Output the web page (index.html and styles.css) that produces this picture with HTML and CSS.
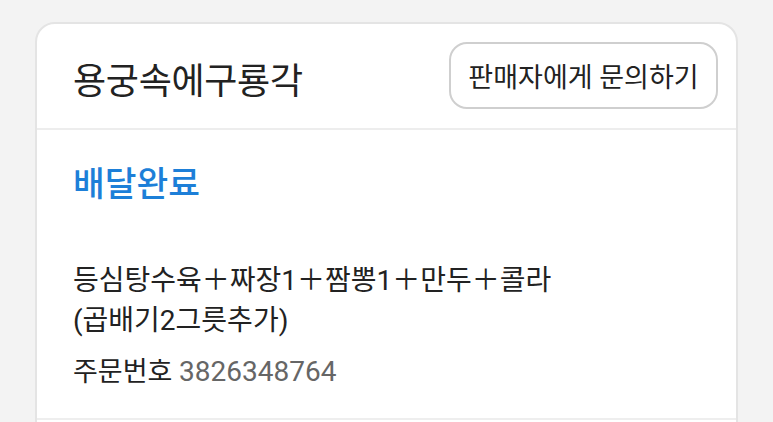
FILE: index.html
```html
<!DOCTYPE html>
<html lang="ko">
<head>
<meta charset="utf-8">
<link rel="stylesheet" href="styles.css">
</head>
<body>
<div class="card">
  <div class="card-head">
    <div class="store">용궁속에구룡각</div>
    <button class="ask">판매자에게 문의하기</button>
  </div>
  <div class="card-body">
    <div class="status">배달완료</div>
    <div class="items">등심탕수육＋짜장1＋짬뽕1＋만두＋콜라<br>(곱배기2그릇추가)</div>
    <div class="order">주문번호 <span class="order-no">3826348764</span></div>
  </div>
  <div class="card-divider"></div>
</div>
</body>
</html>
```

FILE: styles.css
```css
* { box-sizing: border-box; }
html, body { margin: 0; padding: 0; }
body {
  background: #f3f3f3;
  font-family: Roboto, "Noto Sans CJK KR", sans-serif;
  color: #222;
  height: 422px;
  overflow: hidden;
  padding: 22px 35px 0 35px;
}
.card {
  background: #fff;
  border: 2px solid #e4e4e4;
  border-radius: 20px;
  width: 703px;
  height: 440px;
}
.card-head {
  height: 106px;
  display: flex;
  align-items: center;
  justify-content: space-between;
  padding: 0 18px 0 36px;
  border-bottom: 2px solid #ededed;
}
.store {
  font-size: 36px;
  color: #222;
  letter-spacing: -0.3px;
  margin-top: 3px;
}
.ask {
  font-family: inherit;
  font-size: 27px;
  color: #222;
  background: #fff;
  border: 2px solid #cfcfcf;
  border-radius: 18px;
  width: 269px;
  height: 67px;
  padding: 0;
  margin-top: -2px;
}
.card-body {
  padding: 32px 36px 0 36px;
  height: 288px;
}
.status {
  font-size: 34.5px;
  font-weight: 500;
  color: #1d7fd8;
  line-height: 44px;
}
.items {
  margin-top: 55px;
  font-size: 28px;
  line-height: 40px;
  color: #222;
}
.order {
  margin-top: 13px;
  font-size: 27px;
  line-height: 36px;
  color: #222;
}
.order-no {
  color: #666;
  font-size: 28px;
}
.card-divider {
  height: 2px;
  background: #eeeeee;
}
```
